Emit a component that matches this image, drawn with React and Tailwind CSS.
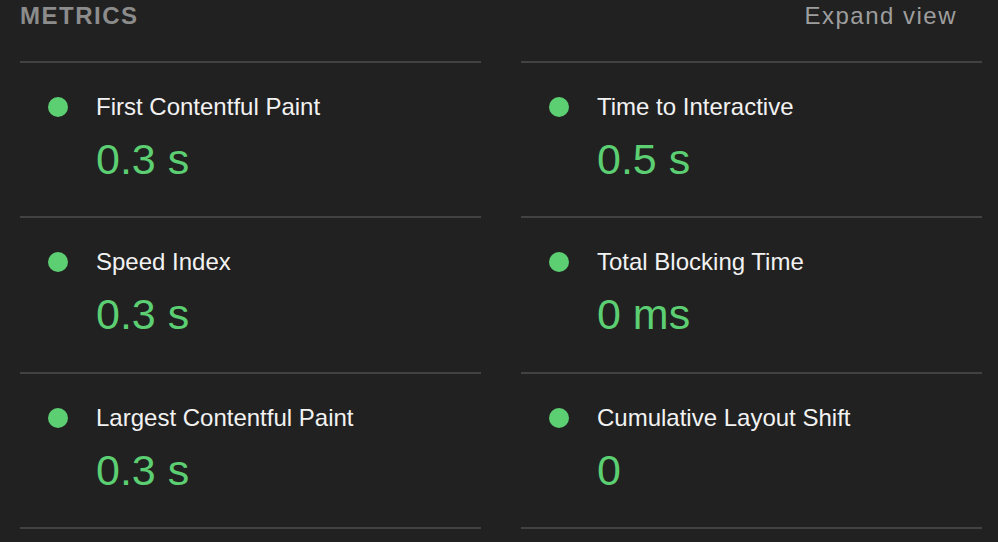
const metrics = [
  { title: "First Contentful Paint", value: "0.3 s" },
  { title: "Time to Interactive", value: "0.5 s" },
  { title: "Speed Index", value: "0.3 s" },
  { title: "Total Blocking Time", value: "0 ms" },
  { title: "Largest Contentful Paint", value: "0.3 s" },
  { title: "Cumulative Layout Shift", value: "0" },
];

const MetricCell = ({ title, value, tall }) => (
  <div className={`border-t-2 border-[#424242] pt-[28px] ${tall ? "pb-[34px]" : "pb-[33px]"}`}>
    <div className="flex items-center">
      <span className="ml-[28px] w-5 h-5 rounded-full bg-[#5ccf73]" />
      <span className="ml-[28px] text-[24px] leading-[32px] text-[#f2f2f2]">{title}</span>
    </div>
    <div className="mt-[12px] pl-[76px] text-[43px] leading-[48px] text-[#5ccf73]">{value}</div>
  </div>
);

export default function App() {
  return (
    <div
      className="w-[998px] h-[542px] overflow-hidden bg-[#212121]"
      style={{ fontFamily: '"Liberation Sans", Arial, sans-serif' }}>
      {/* Header */}
      <div className="flex justify-between items-start pl-5 pr-[41px] pt-[2px] h-[61px]">
        <span className="text-[24px] leading-[28px] font-bold tracking-[1.5px] text-[#8c8c8c]">METRICS</span>
        <span className="text-[24px] leading-[28px] tracking-[1.5px] text-[#9e9e9e]">Expand view</span>
      </div>

      {/* Metrics grid */}
      <div className="grid grid-cols-[461px_461px] gap-x-[40px] pl-5">
        {metrics.map((m, i) => (
          <MetricCell key={m.title} title={m.title} value={m.value} tall={i === 2 || i === 3} />
        ))}
        <div className="border-t-2 border-[#424242]" />
        <div className="border-t-2 border-[#424242]" />
      </div>
    </div>
  );
}
